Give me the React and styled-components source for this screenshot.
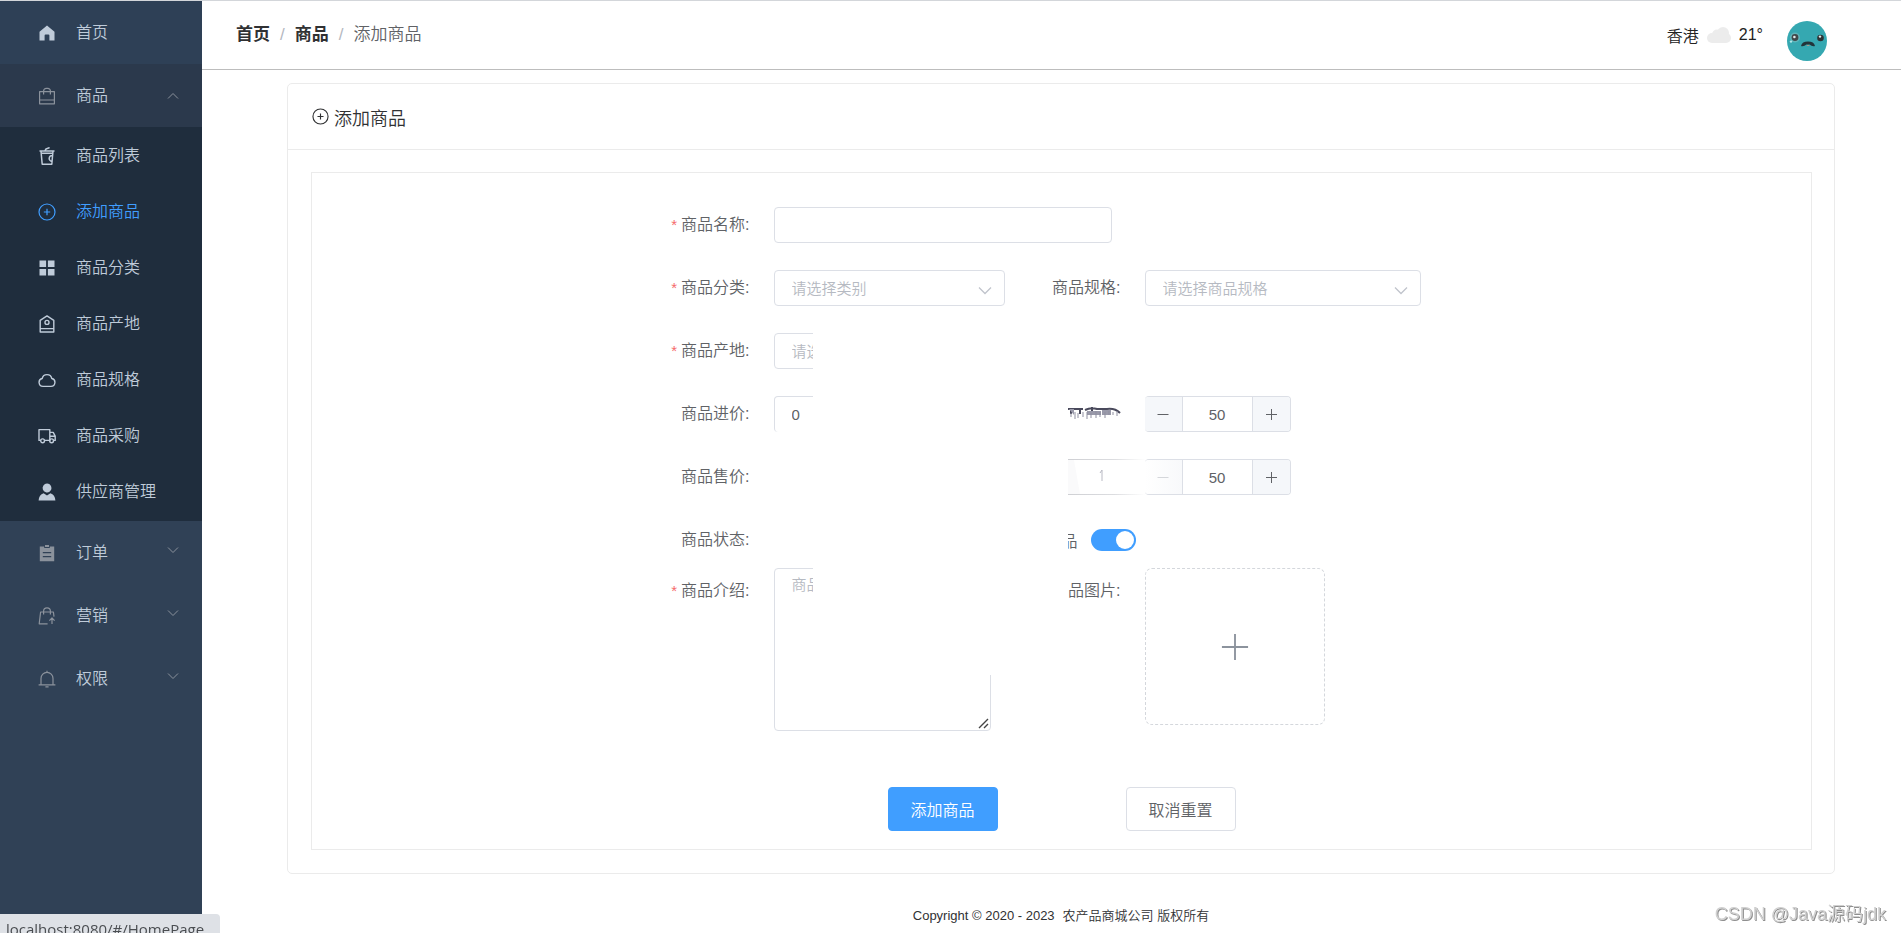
import styled, { createGlobalStyle, css } from "styled-components";

const GlobalStyle = createGlobalStyle`
  *, *::before, *::after {
    box-sizing: border-box;
  }
  body {
    margin: 0;
    background: #fff;
    color: #303133;
    font-family: "Liberation Sans", "Noto Sans CJK SC", sans-serif;
    font-weight: 350;
    font-size: 16px;
  }
  button, input, select, textarea {
    font: inherit;
    color: inherit;
    margin: 0;
  }
  a {
    color: inherit;
    text-decoration: none;
  }
`;

const Layout = styled.div`
  display: flex;
  min-height: 100vh;
  border-top: 1px solid #d3d6da;
`;

/* sidebar */

const Sidebar = styled.nav`
  flex: none;
  width: 202px;
  background: #304156;
  color: #bfcbd9;
`;

const itemRow = css`
  display: flex;
  align-items: center;
  gap: 20px;
  width: 100%;
  padding: 0 23px 0 38px;
  border: 0;
  line-height: 22px;
  text-align: left;
`;

const HomeLink = styled.a`
  ${itemRow}
  height: 63px;
  background: #2e4056;
`;

const GroupButton = styled.button`
  ${itemRow}
  height: 63px;
  background: ${({ $open }) => ($open ? "#2b394c" : "transparent")};

  > svg {
    color: #8b929c;
  }
`;

const GroupName = styled.span`
  flex: 1;
`;

const Arrow = styled.svg`
  flex: none;
  width: 12px;
  height: 8px;
  margin-bottom: ${({ $open }) => ($open ? 0 : 6)}px;
  transform: ${({ $open }) => ($open ? "rotate(180deg)" : "none")};
  fill: none;
  stroke: currentColor;
`;

const SubMenu = styled.div`
  padding: 1px 0;
  background: #1f2d3d;
`;

const SubLink = styled.a`
  ${itemRow}
  height: 56px;
  color: ${({ $active }) => ($active ? "#409eff" : "#bfcbd9")};
`;

const Glyph = styled.svg`
  flex: none;
  width: ${({ $size }) => $size || 18}px;
  height: ${({ $size }) => $size || 18}px;
  fill: none;
  stroke: currentColor;
  stroke-width: 1.2;
  stroke-linejoin: round;
`;

/* header */

const Main = styled.div`
  flex: 1;
  min-width: 0;
`;

const Header = styled.header`
  display: flex;
  align-items: center;
  justify-content: space-between;
  height: 69px;
  padding: 0 74px 0 34px;
  border-bottom: 1px solid #bdbdbd;
`;

const Crumbs = styled.div`
  display: flex;
  font-size: 17px;
  line-height: 24px;

  a {
    font-weight: 700;
  }
  span {
    color: #606266;
  }
`;

const Slash = styled.i`
  margin: 0 10px;
  font-style: normal;
  color: #b4b8bf;
`;

const HeaderRight = styled.div`
  display: flex;
  align-items: center;
`;

const Weather = styled.div`
  display: flex;
  align-items: center;
  gap: 8px;
  color: #222;
`;

const Avatar = styled.svg`
  width: 40px;
  height: 40px;
  margin: 12px 0 0 24px;
`;

/* card */

const Content = styled.main`
  padding: 13px 66px 0 85px;
`;

const Card = styled.section`
  border: 1px solid #ebebeb;
  border-radius: 5px;
`;

const CardTitle = styled.h1`
  display: flex;
  align-items: center;
  gap: 5px;
  height: 66px;
  margin: 0;
  padding: 0 24px;
  border-bottom: 1px solid #ebebeb;
  font-size: 18px;
  font-weight: inherit;
`;

const CardBody = styled.div`
  padding: 22px 22px 23px 23px;
`;

const Panel = styled.div`
  padding: 34px 0 18px;
  border: 1px solid #ebebeb;
`;

const Form = styled.form`
  color: #606266;
`;

const Fields = styled.div`
  position: relative;
  max-width: 796px;
  margin: 0 auto;
`;

const Row = styled.div`
  display: grid;
  grid-template-columns: 110px 261px 110px 1fr;
  align-items: start;
  min-height: 36px;
  margin-bottom: ${({ $gap }) => $gap ?? 27}px;
`;

const Label = styled.label`
  padding-right: 24px;
  line-height: ${({ $tall }) => ($tall ? 46 : 36)}px;
  text-align: right;
  white-space: nowrap;

  &::before {
    content: "${({ $required }) => ($required ? "*" : "")}";
    margin-right: 4px;
    font-size: 15px;
    color: #f56c6c;
  }
`;

const control = css`
  display: block;
  border: 1px solid #dcdfe6;
  border-radius: 4px;
  outline: 0;
  background: #fff;
  font-size: 15px;

  &::placeholder {
    color: #b6bac2;
  }
`;

const Input = styled.input`
  ${control}
  width: ${({ $width }) => $width}px;
  height: 36px;
  padding: 0 17px;
  border-bottom-width: ${({ $open }) => ($open ? 0 : 1)}px;
`;

const SelectBox = styled.div`
  position: relative;
  width: ${({ $width }) => $width}px;

  svg {
    position: absolute;
    right: 13px;
    top: 16px;
    width: 14px;
    height: 9px;
    fill: none;
    stroke: #c0c4cc;
    stroke-width: 1.3;
    pointer-events: none;
  }
`;

const NativeSelect = styled.select`
  ${control}
  width: 100%;
  height: 36px;
  padding: 0 17px;
  appearance: none;
  color: #b6bac2;
`;

const AreaBox = styled.div`
  position: relative;
  width: 217px;

  svg {
    position: absolute;
    right: 2px;
    bottom: 2px;
    width: 11px;
    height: 11px;
    fill: none;
    stroke: #444;
    stroke-width: 1.4;
    pointer-events: none;
  }
`;

const TextArea = styled.textarea`
  ${control}
  width: 100%;
  height: 163px;
  padding: 5px 17px;
  line-height: 22px;

  &::-webkit-resizer {
    background: transparent;
  }
`;

const Counter = styled.div`
  display: flex;
  width: 146px;
  height: 36px;
  border: 1px solid #dcdfe6;
  border-left-width: 0;
  border-radius: 4px;
  overflow: hidden;

  input {
    flex: 1;
    min-width: 0;
    padding: 0;
    border: solid #dcdfe6;
    border-width: 0 1px;
    outline: 0;
    font-size: 15px;
    text-align: center;
  }
`;

const StepButton = styled.button`
  display: flex;
  align-items: center;
  justify-content: center;
  width: 37px;
  padding: 0;
  border: 0;
  background: #f5f7fa;
  ${({ $faded }) =>
    $faded &&
    css`
      background: linear-gradient(to right, #fff, #f8f9fb);
      color: #d5d7db;
    `}
`;

const Smudge = styled.svg`
  width: 77px;
  height: 36px;
  margin-left: 33px;
`;

const SwitchField = styled.label`
  grid-column: 3 / 5;
  display: flex;
  align-items: center;
  gap: 13px;
  height: 36px;
  margin-left: 11px;
`;

const Switch = styled.input`
  display: flex;
  align-items: center;
  justify-content: flex-end;
  width: 45px;
  height: 22px;
  padding: 2px;
  border-radius: 11px;
  background: #409eff;
  appearance: none;

  &::before {
    content: "";
    width: 18px;
    height: 18px;
    border-radius: 50%;
    background: #fff;
  }
`;

const Upload = styled.button`
  display: flex;
  align-items: center;
  justify-content: center;
  width: 180px;
  height: 157px;
  border: 1px dashed #d4d7dc;
  border-radius: 7px;
  background: #fff;
  color: #8c939d;
`;

const Eraser = styled.div`
  position: absolute;
  top: 109px;
  left: 149px;
  width: 255px;
  height: 359px;
  background: #fff;
`;

const Actions = styled.div`
  display: flex;
  justify-content: center;
  gap: 128px;
  margin-top: 56px;
`;

const Button = styled.button`
  width: 110px;
  height: 44px;
  padding: 0;
  border: 1px solid ${({ $primary }) => ($primary ? "#409eff" : "#dcdfe6")};
  border-radius: 4px;
  background: ${({ $primary }) => ($primary ? "#409eff" : "#fff")};
  color: ${({ $primary }) => ($primary ? "#fff" : "#606266")};
`;

const Footer = styled.footer`
  display: flex;
  justify-content: center;
  gap: 8px;
  padding: 32px 66px 8px 85px;
  font-size: 13px;
  line-height: 20px;
`;

const StatusBar = styled.div`
  position: fixed;
  left: 0;
  bottom: 0;
  width: 220px;
  height: 19px;
  padding: 4px 6px 0;
  border-top-right-radius: 4px;
  background: #dee1e6;
  color: #4a4d51;
  font: 400 15px/22px "Open Sans", sans-serif;
  white-space: nowrap;
`;

const Watermark = styled.div`
  position: fixed;
  right: 15px;
  bottom: 6px;
  color: #d0d0d0;
  font-size: 18px;
  line-height: 26px;
  text-shadow: 1px 1px 0 #8f8f8f;
`;

const icons = {
  home: (
    <path
      d="M9 1.5 1.5 7.8V16.5H6.6V11.6q0-1 1-1h2.8q1 0 1 1V16.5H16.5V7.8z"
      fill="currentColor"
      stroke="none"
    />
  ),
  bag: (
    <path d="M1.6 4.6h14.8v12.2H1.6zM1.6 13h14.8M5.6 7.4V4a2.6 2.6 0 0 1 2.6-2.6h1.6A2.6 2.6 0 0 1 12.4 4v3.4" />
  ),
  cup: (
    <path
      d="M1.5 4h15M3 4l1.2 13.2h9.6L15 4M2.6 6.2h12.8M7 3.6 8 2l3.6-1.4M14.4 8.4a3 3 0 1 0-.4 6"
      strokeWidth="1.5"
    />
  ),
  plus: (
    <>
      <circle cx="9" cy="9" r="8" />
      <path d="M9 5.8v6.4M5.8 9h6.4" />
    </>
  ),
  grid: (
    <path
      d="M1.5 1.5h6.6v6.6H1.5zM9.9 1.5h6.6v6.6H9.9zM1.5 9.9h6.6v6.6H1.5zM9.9 9.9h6.6v6.6H9.9z"
      fill="currentColor"
      stroke="none"
    />
  ),
  tag: (
    <>
      <path d="M2.2 17V5.4L9 .9l6.8 4.5V17zM2.2 13.6h13.6" strokeWidth="1.4" />
      <circle cx="9" cy="7.4" r="2" strokeWidth="1.4" />
    </>
  ),
  cloud: (
    <path
      d="M5 15.4a4 4 0 0 1-.8-7.9 4.9 4.9 0 0 1 9.6 0 4 4 0 0 1-.8 7.9z"
      strokeWidth="1.4"
    />
  ),
  truck: (
    <>
      <path
        d="M2.6 13.4H1V2.6h10.8v10.8H6.6M11.8 5.4h3.4l2 3.8v4.2h-1.4M12 9.2h5"
        strokeWidth="1.4"
      />
      <circle cx="4.6" cy="13.8" r="1.9" strokeWidth="1.4" />
      <circle cx="13.6" cy="13.8" r="1.9" strokeWidth="1.4" />
    </>
  ),
  user: (
    <path
      d="M9 .6a4.4 4.4 0 0 1 2.8 7.8A4.4 4.4 0 1 1 9 .6M5.6 10.2 9 12.6l3.4-2.4q4.6 1.6 5 7.2H.6q.4-5.6 5-7.2z"
      fill="currentColor"
      stroke="none"
    />
  ),
  order: (
    <path
      d="M1.8 2.4h4.4V4h5.6V2.4h4.4v14.8H1.8zM7 1h4v2H7zM4.8 8v1.2h8.4V8zM4.8 12v1.2h8.4V12z"
      fill="currentColor"
      fillRule="evenodd"
      stroke="none"
    />
  ),
  sale: (
    <path d="M9.6 16.8H1.2L2.6 5h12.8l.6 4.6M5.6 7.6V4.2a3.4 3.4 0 0 1 6.8 0v3.4M14 17v-5.6M11.4 13.6 14 11l2.6 2.6" />
  ),
  bell: (
    <path d="M.6 14.8h16.8M3 14.8V8.4a6 6 0 0 1 12 0v6.4M9 2.2V.8M7.4 16.8h3.2" />
  ),
  minus: <path d="M3.5 9.500h11" strokeWidth="1" />,
  add: <path d="M9.500 4v11M4 9.500h11" strokeWidth="1" />,
  upload: <path d="M9 3.400v11.200M3.400 9h11.200" strokeWidth="0.800" />,
};

const Icon = ({ name, size }) => (
  <Glyph viewBox="0 0 18 18" $size={size} aria-hidden="true">
    {icons[name]}
  </Glyph>
);

const goodsMenu = [
  { icon: "cup", name: "商品列表" },
  { icon: "plus", name: "添加商品", active: true },
  { icon: "grid", name: "商品分类" },
  { icon: "tag", name: "商品产地" },
  { icon: "cloud", name: "商品规格" },
  { icon: "truck", name: "商品采购" },
  { icon: "user", name: "供应商管理" },
];

const Group = ({ icon, name, open }) => (
  <GroupButton type="button" $open={open} aria-expanded={!!open}>
    <Icon name={icon} />
    <GroupName>{name}</GroupName>
    <Arrow $open={open} viewBox="0 0 12 8">
      <path d="M1 1.5 6 6.5 11 1.5" />
    </Arrow>
  </GroupButton>
);

const Select = ({ id, width, placeholder }) => (
  <SelectBox $width={width}>
    <NativeSelect id={id} defaultValue="">
      <option value="">{placeholder}</option>
    </NativeSelect>
    <svg viewBox="0 0 14 9">
      <path d="M1 1.5 7 7.5 13 1.5" />
    </svg>
  </SelectBox>
);

const Stepper = ({ id, label, faded }) => (
  <Counter>
    <StepButton type="button" aria-label="减少" $faded={faded}>
      <Icon name="minus" />
    </StepButton>
    <input id={id} aria-label={label} defaultValue="50" />
    <StepButton type="button" aria-label="增加">
      <Icon name="add" />
    </StepButton>
  </Counter>
);

const Face = () => (
  <Avatar viewBox="0 0 40 40" role="img" aria-label="头像">
    <circle cx="20" cy="20" r="20" fill="#35a8b1" />
    <circle cx="8" cy="16.5" r="5" fill="#5fb5ba" />
    <circle cx="8" cy="16.5" r="3.4" fill="#41484a" />
    <circle cx="7.4" cy="16" r="1.3" fill="#e4ecec" />
    <circle cx="4" cy="20.6" r="1.2" fill="#b5e6e8" />
    <circle cx="33.5" cy="17" r="3.3" fill="#2d3335" />
    <circle cx="33" cy="15.6" r="1.2" fill="#e4ecec" />
    <path
      d="M14 25q1-4.400 7-4.400t7 4.400q-3 .8-5.400-1.600h-3.200Q17 25.800 14 25z"
      fill="#22343a"
    />
    <path d="M19.400 25q1.600-1.800 3.400 0z" fill="#b98" />
  </Avatar>
);

export default function App() {
  return (
    <>
      <GlobalStyle />
      <Layout>
        <Sidebar>
          <HomeLink href="#/HomePage">
            <Icon name="home" />
            首页
          </HomeLink>
          <Group icon="bag" name="商品" open />
          <SubMenu>
            {goodsMenu.map((item) => (
              <SubLink key={item.name} href="#" $active={item.active}>
                <Icon name={item.icon} />
                {item.name}
              </SubLink>
            ))}
          </SubMenu>
          <Group icon="order" name="订单" />
          <Group icon="sale" name="营销" />
          <Group icon="bell" name="权限" />
        </Sidebar>

        <Main>
          <Header>
            <Crumbs>
              <a href="#/HomePage">首页</a>
              <Slash>/</Slash>
              <a href="#/goods">商品</a>
              <Slash>/</Slash>
              <span>添加商品</span>
            </Crumbs>
            <HeaderRight>
              <Weather>
                香港
                <svg width="24" height="16" viewBox="0 0 24 16" fill="#ececec">
                  <circle cx="5" cy="11" r="5" />
                  <circle cx="10" cy="7.5" r="5" />
                  <circle cx="16" cy="6" r="6" />
                  <circle cx="19" cy="11" r="5" />
                  <path d="M5 8h14v8H5z" />
                </svg>
                21°
              </Weather>
              <Face />
            </HeaderRight>
          </Header>

          <Content>
            <Card>
              <CardTitle>
                <Icon name="plus" size={17} />
                添加商品
              </CardTitle>
              <CardBody>
                <Panel>
                  <Form onSubmit={(e) => e.preventDefault()}>
                    <Fields>
                      <Row>
                        <Label htmlFor="name" $required>
                          商品名称:
                        </Label>
                        <Input id="name" $width={338} />
                      </Row>
                      <Row>
                        <Label htmlFor="type" $required>
                          商品分类:
                        </Label>
                        <Select id="type" width={231} placeholder="请选择类别" />
                        <Label htmlFor="spec">商品规格:</Label>
                        <Select
                          id="spec"
                          width={276}
                          placeholder="请选择商品规格"
                        />
                      </Row>
                      <Row>
                        <Label htmlFor="origin" $required>
                          商品产地:
                        </Label>
                        <Select
                          id="origin"
                          width={231}
                          placeholder="请选择产地"
                        />
                      </Row>
                      <Row>
                        <Label htmlFor="cost">商品进价:</Label>
                        <Input id="cost" $width={231} $open defaultValue="0" />
                        <Smudge viewBox="0 0 77 36">
                          <path
                            d="M0 13h15M17 14q6-3 12-1h10q8-1 13 4M3 13v5M12 13v5M24 11v6M35 12v6"
                            fill="none"
                            stroke="#4a4a5c"
                            strokeWidth="2"
                          />
                          <path
                            d="M1 13l5 6V13zM19 15h14v4H19zM34 14h9v5h-9z"
                            fill="#9a9aaa"
                          />
                          <path
                            d="M3 17v4M7 16v7M10 17v5M15 16v5M19 16v7M23 17v5M28 15v7M32 16v5M37 16v6M41 15v4M45 16v3M49 15v5"
                            fill="none"
                            stroke="#8f8fa0"
                          />
                        </Smudge>
                        <Stepper id="stock" label="库存" />
                      </Row>
                      <Row>
                        <Label as="span">商品售价:</Label>
                        <span />
                        <Smudge viewBox="0 0 77 36">
                          <defs>
                            <linearGradient id="fade">
                              <stop offset="0" stopColor="#cfd0d4" />
                              <stop offset="0.6" stopColor="#dcdde0" />
                              <stop offset="1" stopColor="#fff" />
                            </linearGradient>
                          </defs>
                          <path d="M0 1h6l6 34H0z" fill="#fafafb" />
                          <path
                            d="M0 0h77v1H0zM0 35h77v1H0z"
                            fill="url(#fade)"
                          />
                          <path
                            d="M34 11v11M32 14l2-3"
                            fill="none"
                            stroke="#b9bac4"
                          />
                        </Smudge>
                        <Stepper id="warn" label="预警" faded />
                      </Row>
                      <Row $gap={10}>
                        <Label as="span">商品状态:</Label>
                        <span />
                        <SwitchField>
                          商品
                          <Switch type="checkbox" role="switch" defaultChecked />
                        </SwitchField>
                      </Row>
                      <Row $gap={0}>
                        <Label htmlFor="intro" $required $tall>
                          商品介绍:
                        </Label>
                        <AreaBox>
                          <TextArea id="intro" placeholder="商品介绍" />
                          <svg viewBox="0 0 11 11">
                            <path d="M1 10 10 1M6 10l4-4" />
                          </svg>
                        </AreaBox>
                        <Label htmlFor="picture" $tall>
                          商品图片:
                        </Label>
                        <Upload id="picture" type="button">
                          <Icon name="upload" size={42} />
                        </Upload>
                      </Row>
                      <Eraser />
                    </Fields>
                    <Actions>
                      <Button type="submit" $primary>
                        添加商品
                      </Button>
                      <Button type="reset">取消重置</Button>
                    </Actions>
                  </Form>
                </Panel>
              </CardBody>
            </Card>
          </Content>

          <Footer>
            <span>Copyright © 2020 - 2023</span>
            <span>农产品商城公司 版权所有</span>
          </Footer>
        </Main>
      </Layout>
      <StatusBar>localhost:8080/#/HomePage</StatusBar>
      <Watermark>CSDN @Java源码jdk</Watermark>
    </>
  );
}
